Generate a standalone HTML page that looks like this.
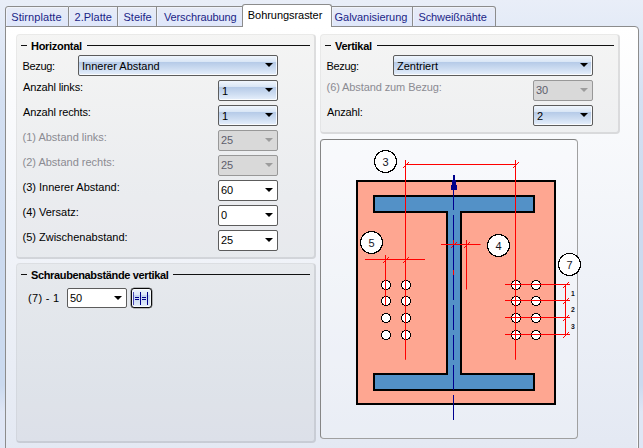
<!DOCTYPE html><html><head><meta charset="utf-8"><title>Bohrungsraster</title><style>
html,body{margin:0;padding:0}
body{width:643px;height:448px;overflow:hidden;position:relative;font-family:"Liberation Sans", sans-serif;font-size:11px;color:#000;
 background:linear-gradient(to bottom,#e9eef8 0,#e4ebf7 26px,#d4e0f2 100px,#ccdaef 214px,#cbdaef 385px,#dfe6f5 412px,#dfe6f5 448px);}
.a{position:absolute}
.t{position:absolute;white-space:nowrap;line-height:13px;height:13px;letter-spacing:-.14px}
.tab{position:absolute;top:6px;height:21px;box-sizing:border-box;border:1px solid #8c8c8c;border-left:none;
 background:linear-gradient(to bottom,#e7ebf6 0,#dfe7fb 100%);color:#1b1f86;box-shadow:inset 1px 1px 0 rgba(255,255,255,.4)}
.tab .t{top:4px}
.panel{position:absolute;left:5px;top:26px;width:634px;height:440px;box-sizing:border-box;border:1px solid #8c8c8c;border-radius:0 4px 0 0;
 background:linear-gradient(to bottom,#ffffff 0,#e4e9f3 414px,#e2e7f2 440px);box-shadow:inset -1px 0 0 rgba(255,255,255,.7)}
.gb{position:absolute;box-sizing:border-box;border-radius:4px;background:rgba(128,128,112,.08);border:1px solid rgba(0,0,20,.045);border-right:2px solid rgba(0,0,20,.09);border-bottom:2px solid rgba(0,0,20,.09)}
.hl{position:absolute;height:0;border-top:1.5px solid #111}
.hd{position:absolute;font-weight:bold;white-space:nowrap;line-height:13px;letter-spacing:-.3px}
.cb{position:absolute;box-sizing:border-box;height:21px;border:1px solid #5c5c5c;border-radius:2px;}
.cb.g{background:linear-gradient(to bottom,#f0f6fd 0,#d8e5f5 32%,#b6cbe8 34%,#cfdef2 70%,#e7f0fc 100%);box-shadow:inset -1px -1px 0 rgba(255,255,255,.8)}
.cb.w{background:#fff}
.cb.d{background:#d9d9d9;border-color:#989898;color:#5e5e6c}
.cb .t{left:3px;top:4px;letter-spacing:0}
.cb i{position:absolute;right:4px;top:7px;width:0;height:0;border-left:4px solid transparent;border-right:4px solid transparent;border-top:4px solid #000}
.cb.d i{border-top-color:#9c9c9c}
.dis{color:#8b8b92}
</style></head><body><div class="panel"></div>
<div class="tab" style="left:5px;width:64px;border-left:1px solid #8c8c8c;border-radius:3px 0 0 0;"><div class="t" style="left:5.300000000000001px;letter-spacing:0.08px">Stirnplatte</div></div>
<div class="tab" style="left:69px;width:49px;"><div class="t" style="left:5.599999999999994px;letter-spacing:0px">2.Platte</div></div>
<div class="tab" style="left:118px;width:39px;"><div class="t" style="left:5.5px;letter-spacing:0px">Steife</div></div>
<div class="tab" style="left:157px;width:85px;border-right:none;"><div class="t" style="left:6.900000000000006px;letter-spacing:-0.1px">Verschraubung</div></div>
<div class="a" style="left:242px;top:4px;width:90px;height:23px;box-sizing:border-box;border:1px solid #8c8c8c;border-bottom:none;border-radius:3px 3px 0 0;background:#fff"><div class="t" style="left:4.800000000000011px;top:4px;letter-spacing:-0.05px">Bohrungsraster</div></div>
<div class="tab" style="left:332px;width:81px;"><div class="t" style="left:2.6000000000000227px;letter-spacing:-0.05px">Galvanisierung</div></div>
<div class="tab" style="left:413px;width:83px;border-radius:0 3px 0 0;"><div class="t" style="left:5.5px;letter-spacing:-0.12px">Schweißnähte</div></div>
<div class="gb" style="left:16px;top:34px;width:300px;height:225px"></div>
<div class="gb" style="left:16px;top:263px;width:300px;height:180px"></div>
<div class="gb" style="left:320px;top:34px;width:300px;height:100px"></div>
<div class="a" style="left:320px;top:139px;width:258px;height:300px;box-sizing:border-box;border:1px solid #8a8a8a;border-color:#808080 #a0a0a0 #a0a0a0 #868686;border-radius:4px;background:rgba(255,255,255,.22)"></div>
<div class="hl" style="left:21px;top:45px;width:6px"></div>
<div class="hd" style="left:31px;top:39.5px;">Horizontal</div>
<div class="hl" style="left:86.5px;top:45px;width:223.5px"></div>
<div class="hl" style="left:325px;top:45px;width:6px"></div>
<div class="hd" style="left:335px;top:39.5px;">Vertikal</div>
<div class="hl" style="left:377px;top:45px;width:237px"></div>
<div class="hl" style="left:21px;top:274px;width:6px"></div>
<div class="hd" style="left:31px;top:268.5px;letter-spacing:-.36px">Schraubenabstände vertikal</div>
<div class="hl" style="left:173px;top:274px;width:137px"></div>
<div class="t " style="left:22.6px;top:60px;letter-spacing:-.35px">Bezug:</div>
<div class="cb g" style="left:78px;top:55px;width:200px;"><div class="t" style="">Innerer Abstand</div><i></i></div>
<div class="t " style="left:23px;top:81px;">Anzahl links:</div>
<div class="cb g" style="left:218px;top:80px;width:60px;"><div class="t" style="">1</div><i></i></div>
<div class="t " style="left:23px;top:106px;">Anzahl rechts:</div>
<div class="cb g" style="left:218px;top:105px;width:60px;"><div class="t" style="">1</div><i></i></div>
<div class="t dis" style="left:22.5px;top:131px;letter-spacing:0">(1) Abstand links:</div>
<div class="cb d" style="left:218px;top:130px;width:60px;"><div class="t" style="left:2px;top:3px;">25</div><i></i></div>
<div class="t dis" style="left:22.5px;top:156px;letter-spacing:0">(2) Abstand rechts:</div>
<div class="cb d" style="left:218px;top:155px;width:60px;"><div class="t" style="left:2px;top:3px;">25</div><i></i></div>
<div class="t " style="left:22.5px;top:181px;letter-spacing:0">(3) Innerer Abstand:</div>
<div class="cb w" style="left:218px;top:180px;width:60px;"><div class="t" style="left:2px;top:3px;">60</div><i></i></div>
<div class="t " style="left:22.5px;top:206px;letter-spacing:0">(4) Versatz:</div>
<div class="cb w" style="left:218px;top:205px;width:60px;"><div class="t" style="left:2px;top:3px;">0</div><i></i></div>
<div class="t " style="left:22.5px;top:231px;letter-spacing:0">(5) Zwischenabstand:</div>
<div class="cb w" style="left:218px;top:230px;width:60px;"><div class="t" style="left:2px;top:3px;">25</div><i></i></div>
<div class="t " style="left:326.6px;top:60px;letter-spacing:-.35px">Bezug:</div>
<div class="cb g" style="left:393px;top:55px;width:200px;"><div class="t" style="">Zentriert</div><i></i></div>
<div class="t dis" style="left:326.6px;top:81px;letter-spacing:-.1px">(6) Abstand zum Bezug:</div>
<div class="cb d" style="left:533px;top:80px;width:60px;"><div class="t" style="left:2px;top:3px;">30</div><i></i></div>
<div class="t " style="left:327px;top:106px;">Anzahl:</div>
<div class="cb g" style="left:533px;top:105px;width:60px;"><div class="t" style="">2</div><i></i></div>
<div class="t " style="left:28px;top:292px;letter-spacing:.3px">(7) - 1</div>
<div class="cb w" style="left:67px;top:288px;width:60px;height:20px;"><div class="t" style="left:2px;top:3px;">50</div><i></i></div>
<div class="a" style="left:131px;top:288px;width:21px;height:20px;box-sizing:border-box;border:1px solid #0a0a0a;border-radius:3px;background:linear-gradient(to bottom,#eef4fd 0,#dbe6f7 32%,#c3d5ef 36%,#d3e1f5 70%,#e6effc 100%);box-shadow:inset 0 0 0 1px rgba(255,255,255,.75), 0 0 0 .3px #222"></div>
<svg class="a" style="left:0;top:0" width="643" height="448" viewBox="0 0 643 448"><rect x="357" y="181" width="198" height="223" fill="#fea691" stroke="#000" stroke-width="2"/><path d="M374 196H534V212H461V374H534V390H374V374H447V212H374Z" fill="#5391c7" stroke="#000" stroke-width="2" stroke-linejoin="miter"/><path d="M405.5 160L405.5 359.5" stroke="#ff0000" stroke-width="1" fill="none"/><path d="M515.5 160L515.5 359.5" stroke="#ff0000" stroke-width="1" fill="none"/><path d="M405 164.5L516 164.5" stroke="#ff0000" stroke-width="1" fill="none"/><path d="M403 168L409 162" stroke="#ff0000" stroke-width="1" fill="none" shape-rendering="crispEdges"/><path d="M513 168L519 162" stroke="#ff0000" stroke-width="1" fill="none" shape-rendering="crispEdges"/><path d="M365 259.5L425 259.5" stroke="#ff0000" stroke-width="1" fill="none"/><path d="M385.5 255L385.5 305" stroke="#ff0000" stroke-width="1" fill="none"/><path d="M383 263L389 257" stroke="#ff0000" stroke-width="1" fill="none" shape-rendering="crispEdges"/><path d="M403 263L409 257" stroke="#ff0000" stroke-width="1" fill="none" shape-rendering="crispEdges"/><path d="M441 244.5L480.5 244.5" stroke="#ff0000" stroke-width="1" fill="none"/><path d="M466.5 240L466.5 289.5" stroke="#ff0000" stroke-width="1" fill="none"/><path d="M451 248L457 242" stroke="#ff0000" stroke-width="1" fill="none" shape-rendering="crispEdges"/><path d="M464 248L470 242" stroke="#ff0000" stroke-width="1" fill="none" shape-rendering="crispEdges"/><circle cx="386" cy="285" r="4.5" fill="#fff" stroke="#000" stroke-width="1" shape-rendering="crispEdges"/><circle cx="406" cy="285" r="4.5" fill="#fff" stroke="#000" stroke-width="1" shape-rendering="crispEdges"/><circle cx="516" cy="285" r="4.5" fill="#fff" stroke="#000" stroke-width="1" shape-rendering="crispEdges"/><circle cx="536" cy="285" r="4.5" fill="#fff" stroke="#000" stroke-width="1" shape-rendering="crispEdges"/><circle cx="386" cy="301" r="4.5" fill="#fff" stroke="#000" stroke-width="1" shape-rendering="crispEdges"/><circle cx="406" cy="301" r="4.5" fill="#fff" stroke="#000" stroke-width="1" shape-rendering="crispEdges"/><circle cx="516" cy="301" r="4.5" fill="#fff" stroke="#000" stroke-width="1" shape-rendering="crispEdges"/><circle cx="536" cy="301" r="4.5" fill="#fff" stroke="#000" stroke-width="1" shape-rendering="crispEdges"/><circle cx="386" cy="318" r="4.5" fill="#fff" stroke="#000" stroke-width="1" shape-rendering="crispEdges"/><circle cx="406" cy="318" r="4.5" fill="#fff" stroke="#000" stroke-width="1" shape-rendering="crispEdges"/><circle cx="516" cy="318" r="4.5" fill="#fff" stroke="#000" stroke-width="1" shape-rendering="crispEdges"/><circle cx="536" cy="318" r="4.5" fill="#fff" stroke="#000" stroke-width="1" shape-rendering="crispEdges"/><circle cx="386" cy="335" r="4.5" fill="#fff" stroke="#000" stroke-width="1" shape-rendering="crispEdges"/><circle cx="406" cy="335" r="4.5" fill="#fff" stroke="#000" stroke-width="1" shape-rendering="crispEdges"/><circle cx="516" cy="335" r="4.5" fill="#fff" stroke="#000" stroke-width="1" shape-rendering="crispEdges"/><circle cx="536" cy="335" r="4.5" fill="#fff" stroke="#000" stroke-width="1" shape-rendering="crispEdges"/><path d="M385.5 255L385.5 305" stroke="#ff0000" stroke-width="1" fill="none"/><path d="M405.5 160L405.5 359.5" stroke="#ff0000" stroke-width="1" fill="none"/><path d="M515.5 160L515.5 359.5" stroke="#ff0000" stroke-width="1" fill="none"/><path d="M505 284.5L570 284.5" stroke="#ff0000" stroke-width="1" fill="none"/><path d="M563 288L569 282" stroke="#ff0000" stroke-width="1" fill="none" shape-rendering="crispEdges"/><path d="M505 300.5L570 300.5" stroke="#ff0000" stroke-width="1" fill="none"/><path d="M563 304L569 298" stroke="#ff0000" stroke-width="1" fill="none" shape-rendering="crispEdges"/><path d="M505 317.5L570 317.5" stroke="#ff0000" stroke-width="1" fill="none"/><path d="M563 321L569 315" stroke="#ff0000" stroke-width="1" fill="none" shape-rendering="crispEdges"/><path d="M505 334.5L570 334.5" stroke="#ff0000" stroke-width="1" fill="none"/><path d="M563 338L569 332" stroke="#ff0000" stroke-width="1" fill="none" shape-rendering="crispEdges"/><path d="M565.5 284L565.5 335" stroke="#ff0000" stroke-width="1" fill="none"/><path d="M453.5 240L453.5 289.5" stroke="#ff0000" stroke-width="1" fill="none"/><path d="M453.5 175L453.5 210" stroke="#00008f" stroke-width="1" fill="none"/><path d="M453.5 215L453.5 240" stroke="#00008f" stroke-width="1" fill="none"/><path d="M453.5 245L453.5 270" stroke="#00008f" stroke-width="1" fill="none"/><path d="M453.5 275L453.5 300" stroke="#00008f" stroke-width="1" fill="none"/><path d="M453.5 305L453.5 330" stroke="#00008f" stroke-width="1" fill="none"/><path d="M453.5 335L453.5 360" stroke="#00008f" stroke-width="1" fill="none"/><path d="M453.5 365L453.5 390" stroke="#00008f" stroke-width="1" fill="none"/><path d="M453.5 395L453.5 420" stroke="#00008f" stroke-width="1" fill="none"/><path d="M453 175h2v5h1v5h1v5h-6v-5h1v-5h1z" fill="#00008b" shape-rendering="crispEdges"/><circle cx="385.5" cy="161.5" r="11" fill="#fff" stroke="#000" stroke-width="1.12" shape-rendering="crispEdges"/><text x="385.5" y="166.0" text-anchor="middle" font-family='"Liberation Sans", sans-serif' font-size="11" fill="#15151f">3</text><circle cx="371.5" cy="242.5" r="11" fill="#fff" stroke="#000" stroke-width="1.12" shape-rendering="crispEdges"/><text x="371.5" y="247.0" text-anchor="middle" font-family='"Liberation Sans", sans-serif' font-size="11" fill="#15151f">5</text><circle cx="498.5" cy="245.5" r="11" fill="#fff" stroke="#000" stroke-width="1.12" shape-rendering="crispEdges"/><text x="498.5" y="250.0" text-anchor="middle" font-family='"Liberation Sans", sans-serif' font-size="11" fill="#15151f">4</text><circle cx="569.5" cy="264.5" r="11" fill="#fff" stroke="#000" stroke-width="1.12" shape-rendering="crispEdges"/><text x="569.5" y="269.0" text-anchor="middle" font-family='"Liberation Sans", sans-serif' font-size="11" fill="#15151f">7</text><text x="573" y="296" text-anchor="middle" font-family='"Liberation Sans", sans-serif' font-size="6.8" font-weight="bold" fill="#101018">1</text><text x="573" y="312" text-anchor="middle" font-family='"Liberation Sans", sans-serif' font-size="6.8" font-weight="bold" fill="#101018">2</text><text x="573" y="328.5" text-anchor="middle" font-family='"Liberation Sans", sans-serif' font-size="6.8" font-weight="bold" fill="#101018">3</text><g shape-rendering="crispEdges"><rect x="133" y="292" width="1" height="13" fill="#4848b8"/><rect x="140" y="292" width="1" height="13" fill="#00008b"/><rect x="147" y="292" width="1" height="13" fill="#00008b"/><rect x="135" y="297" width="4" height="1" fill="#00008b"/><rect x="135" y="299" width="4" height="1" fill="#00008b"/><rect x="142" y="297" width="4" height="1" fill="#00008b"/><rect x="142" y="299" width="4" height="1" fill="#00008b"/></g></svg></body></html>
